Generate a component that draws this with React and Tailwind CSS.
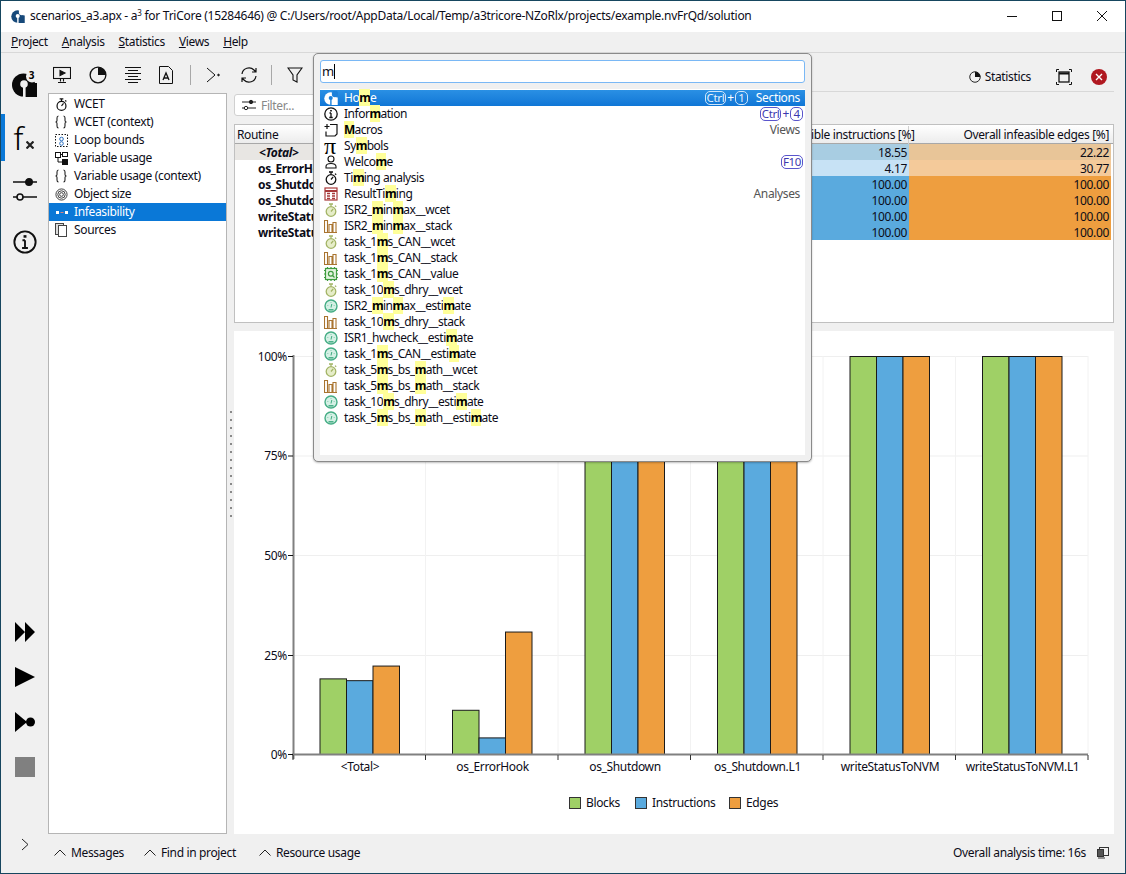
import React from 'react';

const font = "font-['Noto_Sans',sans-serif] text-[12px] tracking-[-0.35px] text-[#0c0c18]";

const Stopwatch = ({ c = '#111', fill = 'none', s = 14 }) => (
  <svg width={s} height={s} viewBox="0 0 14 14" fill="none" stroke={c} strokeWidth="1.3">
    <circle cx="7" cy="8.500" r="4.800" fill={fill} />
    <path d="M5 1h4M7 1v2.500M11 2.600l1.200 1.200M7 8.500l2.200-2.600" />
  </svg>
);

const GreenWatch = () => <Stopwatch c="#a3b466" fill="#e6edc9" />;

const Gauge = () => (
  <svg width="14" height="14" viewBox="0 0 14 14" fill="none" stroke="#45ad85" strokeWidth="1.400">
    <circle cx="7" cy="7" r="6" fill="#d5f0e5" />
    <path d="M7 8.500l.8-3.500M3.800 6.500v.6M10.200 6.500v.6M7 3.200v.6" strokeWidth="1.100" />
    <path d="M4.500 10.800h5" strokeWidth="1.500" />
  </svg>
);

const Bars = () => (
  <svg width="13" height="14" viewBox="0 0 13 14" fill="none" stroke="#a9742f" strokeWidth="1.100">
    <path d="M.5 13.500V1.500h3v12M5 13.500V5.500h3v8M9 13.500V3.500h3v10M0 13.500h13" />
  </svg>
);

const Chip = () => (
  <svg width="14" height="14" viewBox="0 0 14 14" fill="none" stroke="#3f9c3f" strokeWidth="1.200">
    <rect x="1.500" y="1.500" width="11" height="11" fill="#e4f4e0" />
    <circle cx="6.800" cy="6.800" r="2.400" />
    <path d="M8.500 8.500l2 2M0 3.500h1.500M0 7h1.500M0 10.500h1.500M12.500 3.500H14M12.500 7H14M12.500 10.500H14M3.500 0v1.500M7 0v1.500M10.500 0v1.500M3.500 12.500V14M7 12.500V14M10.500 12.500V14" />
  </svg>
);

const ResultTable = () => (
  <svg width="14" height="14" viewBox="0 0 14 14" fill="none" stroke="#a83a3a" strokeWidth="1.200">
    <rect x="1" y="1" width="12" height="12" />
    <path d="M1 4h12" strokeWidth="2" />
    <path d="M3 6.500h3M8 6.500h3M3 9h3M8 9h3M3 11.500h3M8 11.500h3" strokeWidth="1.400" />
  </svg>
);

// a3 mark: disc with hole and slit, stem on the right, notch top right for the 3
const Logo = ({ w = 14, h = 14, c = '#111', bg = '#fff' }) => (
  <svg width={w} height={h} viewBox="0 0 25 26">
    <circle cx="11.500" cy="14" r="11.500" fill={c} />
    <rect x="19" y="12" width="6" height="14" fill={c} />
    <rect x="11.500" y="22" width="9" height="4" fill={c} />
    <circle cx="12" cy="13" r="3.800" fill={bg} />
    <rect x="11" y="13" width="2.600" height="13" fill={bg} />
    <circle cx="20" cy="5.500" r="6" fill={bg} />
  </svg>
);

const Info = ({ s = 14, w = 1.300 }) => (
  <svg width={s} height={s} viewBox="0 0 14 14" fill="none" stroke="#111" strokeWidth={w}>
    <circle cx="7" cy="7" r="6.200" />
    <path d="M7 6v4.500M5.500 6H7M5.300 10.500h3.400" />
    <path d="M7 3v1.500" strokeWidth="1.700" />
  </svg>
);

const PieIcon = ({ s = 14, w = 1.200 }) => (
  <svg width={s} height={s} viewBox="0 0 16 16">
    <circle cx="8" cy="8" r="7" fill="none" stroke="#111" strokeWidth={w} />
    <path d="M8 8V1a7 7 0 0 1 7 7z" fill="#111" />
  </svg>
);

const Braces = () => (
  <svg width="12" height="14" viewBox="0 0 12 14" fill="none" stroke="#222" strokeWidth="1.100">
    <path d="M3.500 1C2 1 2 1.800 2 3v2.500C2 6.500 1.500 7 .5 7c1 0 1.500.5 1.500 1.500V11c0 1.200 0 2 1.500 2" />
    <path d="M8.500 1C10 1 10 1.800 10 3v2.500c0 1 .5 1.500 1.500 1.500-1 0-1.500.5-1.500 1.500V11c0 1.200 0 2-1.500 2" />
  </svg>
);

const items = [
  { icon: <Logo c="#fff" bg="#1b80da" />, label: 'Ho[m]e', keys: ['Ctrl', '1'], tag: 'Sections', active: true },
  { icon: <Info />, label: 'Infor[m]ation', keys: ['Ctrl', '4'] },
  {
    icon: (
      <svg width="14" height="14" viewBox="0 0 14 14" fill="none" stroke="#111" strokeWidth="1.200">
        <path d="M6 1.500h7V11l-2 2H2V8.500M3 1v5M.5 3.500h5" />
      </svg>
    ),
    label: '[M]acros',
    tag: 'Views',
  },
  { icon: <span className="text-[24px] leading-[14px] font-['Liberation_Serif',serif] text-black">π</span>, label: 'Sy[m]bols' },
  {
    icon: (
      <svg width="14" height="14" viewBox="0 0 14 14" fill="none" stroke="#111" strokeWidth="1.100">
        <circle cx="7" cy="4" r="3" />
        <path d="M2 13v-1.500c0-2 2-3 5-3s5 1 5 3V13z" />
      </svg>
    ),
    label: 'Welco[m]e',
    keys: ['F10'],
  },
  { icon: <Stopwatch />, label: 'Ti[m]ing analysis' },
  { icon: <ResultTable />, label: 'ResultTi[m]ing', tag: 'Analyses' },
  { icon: <GreenWatch />, label: 'ISR2_[m]in[m]ax__wcet' },
  { icon: <Bars />, label: 'ISR2_[m]in[m]ax__stack' },
  { icon: <GreenWatch />, label: 'task_1[m]s_CAN__wcet' },
  { icon: <Bars />, label: 'task_1[m]s_CAN__stack' },
  { icon: <Chip />, label: 'task_1[m]s_CAN__value' },
  { icon: <GreenWatch />, label: 'task_10[m]s_dhry__wcet' },
  { icon: <Gauge />, label: 'ISR2_[m]in[m]ax__esti[m]ate' },
  { icon: <Bars />, label: 'task_10[m]s_dhry__stack' },
  { icon: <Gauge />, label: 'ISR1_hwcheck__esti[m]ate' },
  { icon: <Gauge />, label: 'task_1[m]s_CAN__esti[m]ate' },
  { icon: <GreenWatch />, label: 'task_5[m]s_bs_[m]ath__wcet' },
  { icon: <Bars />, label: 'task_5[m]s_bs_[m]ath__stack' },
  { icon: <Gauge />, label: 'task_10[m]s_dhry__esti[m]ate' },
  { icon: <Gauge />, label: 'task_5[m]s_bs_[m]ath__esti[m]ate' },
];

function Label({ text }) {
  return text.split(/(\[.*?\])/).map((part, i) =>
    part.startsWith('[') ? (
      <span key={i} className="bg-[#ffff99] font-bold text-black tracking-[-0.9px]">{part.slice(1, -1)}</span>
    ) : (
      <span key={i} className="tracking-[-0.45px]">{part}</span>
    )
  );
}

function Keys({ keys, active }) {
  const chip = active ? 'border-[#cfe6fb] text-[#e8f3fd]' : 'border-[#5a55cc] text-[#3c38b0]';
  return (
    <div className="flex items-center gap-[1px] mr-[2px]">
      {keys.map((k, i) => (
        <React.Fragment key={k}>
          {i > 0 && <span className={active ? 'text-white' : 'text-[#3c38b0]'}>+</span>}
          <span className={`h-[14px] px-[1px] min-w-[13px] text-center rounded-[5px] border-[1.5px] leading-[11px] text-[11.5px] ${chip}`}>{k}</span>
        </React.Fragment>
      ))}
    </div>
  );
}

function PaletteRow({ row }) {
  return (
    <div className={`h-4 flex items-center leading-4 ${row.active ? 'bg-gradient-to-b from-[#2a90e4] to-[#0f76d6]' : ''}`}>
      <div className="w-[24px] pl-[4px] flex items-center">{row.icon}</div>
      <div className={`flex-1 whitespace-pre ${row.active ? 'text-white' : ''}`}>
        <Label text={row.label} />
      </div>
      {row.keys && <Keys keys={row.keys} active={row.active} />}
      {row.tag && <span className={`ml-[6px] mr-[5px] ${row.active ? 'text-white' : 'text-[#555]'}`}>{row.tag}</span>}
    </div>
  );
}

const sideItems = [
  { name: 'WCET', icon: <Stopwatch s={13} /> },
  { name: 'WCET (context)', icon: <Braces /> },
  {
    name: 'Loop bounds',
    icon: (
      <svg width="13" height="13" viewBox="0 0 13 13" fill="none" stroke="#111" strokeDasharray="1.500 1.500">
        <rect x=".5" y=".5" width="12" height="12" />
        <circle cx="6.500" cy="5" r="1.800" stroke="#2a6fc0" strokeDasharray="none" />
        <circle cx="6.500" cy="9.500" r="1.800" stroke="#2a6fc0" strokeDasharray="none" />
      </svg>
    ),
  },
  {
    name: 'Variable usage',
    icon: (
      <svg width="13" height="13" viewBox="0 0 13 13" fill="none" stroke="#111">
        <rect x=".5" y=".5" width="5" height="5" />
        <rect x="7.500" y=".5" width="5" height="4" />
        <rect x="7.500" y="7.500" width="5" height="5" fill="#111" />
        <path d="M5.500 2.500h2M3 5.500v4.500h4.500" />
      </svg>
    ),
  },
  { name: 'Variable usage (context)', icon: <Braces /> },
  {
    name: 'Object size',
    icon: (
      <svg width="13" height="13" viewBox="0 0 14 14" fill="none" stroke="#333">
        <circle cx="7" cy="7" r="6" />
        <circle cx="7" cy="7" r="4" />
        <circle cx="7" cy="7" r="2" />
      </svg>
    ),
  },
  {
    name: 'Infeasibility',
    active: true,
    icon: (
      <svg width="14" height="14" viewBox="0 0 14 14">
        <rect x="1" y="6" width="3" height="3" fill="#fff" />
        <rect x="5.500" y="7" width="3" height="1" fill="#d98080" />
        <rect x="10" y="6" width="3" height="3" fill="#fff" />
      </svg>
    ),
  },
  {
    name: 'Sources',
    icon: (
      <svg width="13" height="14" viewBox="0 0 13 14" fill="#fff" stroke="#444">
        <rect x=".5" y=".5" width="8" height="11" fill="#ddd" />
        <rect x="3.500" y="2.500" width="8" height="11" />
      </svg>
    ),
  },
];

const tableRows = [
  { name: '<Total>', i: '18.55', e: '22.22', ci: 'bg-[#a8cde2]', ce: 'bg-[#e8c598]', total: true },
  { name: 'os_ErrorHook', i: '4.17', e: '30.77', ci: 'bg-[#c7e2f5]', ce: 'bg-[#f4ca9a]' },
  { name: 'os_Shutdown', i: '100.00', e: '100.00', ci: 'bg-[#5aaade]', ce: 'bg-[#ee9e3f]' },
  { name: 'os_Shutdown.L1', i: '100.00', e: '100.00', ci: 'bg-[#5aaade]', ce: 'bg-[#ee9e3f]' },
  { name: 'writeStatusToNVM', i: '100.00', e: '100.00', ci: 'bg-[#5aaade]', ce: 'bg-[#ee9e3f]' },
  { name: 'writeStatusToNVM.L1', i: '100.00', e: '100.00', ci: 'bg-[#5aaade]', ce: 'bg-[#ee9e3f]' },
];

const chartGroups = [
  { name: '<Total>', v: [19, 18.55, 22.22] },
  { name: 'os_ErrorHook', v: [11.11, 4.17, 30.77] },
  { name: 'os_Shutdown', v: [100, 100, 100] },
  { name: 'os_Shutdown.L1', v: [100, 100, 100] },
  { name: 'writeStatusToNVM', v: [100, 100, 100] },
  { name: 'writeStatusToNVM.L1', v: [100, 100, 100] },
];
const barColors = ['#9fd066', '#5aaade', '#ee9e3f'];

function Chart() {
  const ticks = [293, 425.5, 558, 690.5, 823, 955.5, 1088];
  const ys = [[356, '100%'], [455.5, '75%'], [555, '50%'], [655, '25%'], [754, '0%']];
  return (
    <svg width="880" height="503" viewBox="234 331 880 503" className="block" fontSize="12" fill="#0c0c18">
      {ys.map(([y]) => <path key={y} d={`M293 ${y + 0.5}H1088`} stroke="#efefef" />)}
      {ticks.slice(1).map(x => <path key={x} d={`M${x} 356V754`} stroke="#f2f2f2" />)}
      {chartGroups.map((g, gi) => {
        const x0 = 320 + gi * 132.5;
        return (
          <g key={g.name}>
            {g.v.map((v, i) => {
              const h = v * 3.98;
              return <rect key={i} x={x0 + i * 26.5} y={754.5 - h} width="26.5" height={h} fill={barColors[i]} stroke="#1a1a1a" />;
            })}
            <text x={x0 + 40} y="771" textAnchor="middle">{g.name}</text>
          </g>
        );
      })}
      <path d="M293.5 355V759M292 754.5H1088" stroke="#808080" strokeWidth="2" fill="none" />
      {ys.map(([y, t]) => (
        <g key={t}>
          <path d={`M288 ${y + 0.5}H293`} stroke="#111" />
          <text x="287" y={y + 4.5} textAnchor="end">{t}</text>
        </g>
      ))}
      {ticks.map(x => <path key={x} d={`M${x} 755V760`} stroke="#333" />)}
      {[[569, 'Blocks', 0], [635, 'Instructions', 1], [729, 'Edges', 2]].map(([x, t, i]) => (
        <g key={t}>
          <rect x={x + 0.5} y="797.5" width="11" height="11" fill={barColors[i]} stroke="#333" />
          <text x={x + 17} y="807">{t}</text>
        </g>
      ))}
    </svg>
  );
}

function Chevron() {
  return (
    <svg width="12" height="7" viewBox="0 0 12 7" fill="none" stroke="#222" strokeWidth="1"><path d="M0.5 6.500L6 1l5.500 5.500" /></svg>
  );
}

export default function App() {
  return (
    <div className={`relative w-[1126px] h-[874px] overflow-hidden flex flex-col bg-[#f0f0f0] border border-[#16465f] ${font}`}>
      {/* title bar */}
      <div className="h-[31px] pb-[1px] bg-white flex items-center pl-[10px] shrink-0">
        <Logo w={14} h={14} c="#17497a" />
        <span className="ml-[5px] whitespace-pre tracking-[-0.27px]">scenarios_a3.apx - a<sup className="text-[8px]">3</sup> for TriCore (15284646) @ C:/Users/root/AppData/Local/Temp/a3tricore-NZoRlx/projects/example.nvFrQd/solution</span>
        <div className="ml-auto flex items-center">
          <div className="w-[45px] flex justify-center"><div className="w-[10px] h-[1px] bg-[#111]" /></div>
          <div className="w-[45px] flex justify-center"><div className="w-[10px] h-[10px] border border-[#111]" /></div>
          <div className="w-[46px] flex justify-center">
            <svg width="10" height="10" viewBox="0 0 10 10" stroke="#111" fill="none"><path d="M0 0l10 10M10 0L0 10" /></svg>
          </div>
        </div>
      </div>
      {/* menu */}
      <div className="h-[21px] shrink-0 flex items-center gap-[14px] pl-[10px] border-b border-[#d8d8d8]">
        {['Project', 'Analysis', 'Statistics', 'Views', 'Help'].map(m => (
          <span key={m}><span className="underline">{m[0]}</span>{m.slice(1)}</span>
        ))}
      </div>
      <div className="flex-1 flex min-h-0">
        {/* icon rail */}
        <div className="w-[47px] shrink-0 flex flex-col items-center">
          <div className="mt-[18px] h-[26px] relative">
            <Logo w={25} h={26} c="#0a0a0a" bg="#f0f0f0" />
            <span className="absolute right-[3px] top-[-3px] text-[10px] font-bold text-black">3</span>
          </div>
          <div className="mt-[17px] self-stretch h-[47px] border-l-[4px] border-[#0a78d7] flex items-center justify-center pr-[5px]">
            <span className="font-['Noto_Sans',sans-serif] font-light text-[32px] leading-none text-black tracking-normal">f</span>
            <svg className="mt-[14px] ml-[3px]" width="8" height="8" viewBox="0 0 8 8" stroke="#222" strokeWidth="2.200"><path d="M.5.500l7 7M7.500.500l-7 7" /></svg>
          </div>
          <svg className="mt-[16px]" width="24" height="24" viewBox="0 0 24 24" fill="none" stroke="#111" strokeWidth="1.600">
            <path d="M0 5h24M0 20h24" />
            <circle cx="16" cy="5" r="3.200" fill="#111" />
            <circle cx="7" cy="20" r="3" fill="#f0f0f0" />
          </svg>
          <div className="mt-[29px] h-6"><Info s={24} w={1.100} /></div>
          <svg className="mt-auto" width="20" height="20" viewBox="0 0 20 20" fill="#000"><path d="M0 0l10 10L0 20zM10 0l10 10-10 10z" /></svg>
          <svg className="mt-[25px]" width="20" height="20" viewBox="0 0 20 20" fill="#000"><path d="M0 0l20 10L0 20z" /></svg>
          <svg className="mt-[25px]" width="20" height="20" viewBox="0 0 20 20" fill="#000"><path d="M0 0l12 10L0 20z" /><circle cx="15.500" cy="10" r="4.500" /></svg>
          <div className="mt-[25px] w-5 h-5 bg-[#808080]" />
          <svg className="mt-[61px] mb-[22px]" width="8" height="13" viewBox="0 0 8 13" fill="none" stroke="#222"><path d="M1 1l6 5.500L1 12" /></svg>
        </div>
        <div className="flex-1 min-w-0 flex flex-col">
          {/* toolbar */}
          <div className="h-[40px] shrink-0 flex items-start">
            <div className="h-[40px] pt-[4px] flex items-center pl-[5px]">
              <svg width="18" height="18" viewBox="0 0 18 18" fill="none" stroke="#111" strokeWidth="1.100">
                <rect x="0.500" y="1.500" width="17" height="11" />
                <path d="M7 4.500l5 2.500-5 2.500z" fill="#111" />
                <path d="M7.500 12.500v3M10.500 12.500v3M5 16.500h8" />
              </svg>
              <div className="ml-[18px] h-[18px]"><PieIcon s={18} /></div>
              <svg className="ml-[17px]" width="18" height="16" viewBox="0 0 18 16" fill="none" stroke="#111"><path d="M1 .5h16M4 3.500h10M1 6.500h16M4 9.500h10M1 12.500h16M4 15.500h10" /></svg>
              <svg className="ml-[17px]" width="14" height="18" viewBox="0 0 14 18" fill="none" stroke="#111">
                <path d="M.5 .5h9l4 4v13H.5z" />
                <path d="M4 14l3-7 3 7M5 12h4" strokeWidth="1.300" />
              </svg>
              <div className="ml-[17px] w-[1px] h-[20px] bg-[#a8a8a8]" />
              <svg className="ml-[15px]" width="14" height="16" viewBox="0 0 14 16" fill="none" stroke="#111"><path d="M1 1l8 7-8 7" /><circle cx="12.500" cy="8" r="0.800" fill="#111" /></svg>
              <svg className="ml-[20px]" width="18" height="18" viewBox="0 0 18 18" fill="none" stroke="#111" strokeWidth="1.200">
                <path d="M2 8a7 7 0 0 1 12-4l2 2M16 2v4h-4M16 10a7 7 0 0 1-12 4l-2-2M2 16v-4h4" />
              </svg>
              <div className="ml-[13px] w-[1px] h-[20px] bg-[#a8a8a8]" />
              <svg className="ml-[15px]" width="16" height="16" viewBox="0 0 16 16" fill="none" stroke="#111" strokeWidth="1.100"><path d="M1 1h14L10 8v7l-4-2V8z" /></svg>
            </div>
            <div className="ml-[30px] flex-1 h-[39px] pt-[9px] mr-[11px] flex items-center justify-end border-b border-[#d8d8d8]">
              <PieIcon s={12} />
              <span className="ml-[4px]">Statistics</span>
              <svg className="ml-[25px]" width="16" height="16" viewBox="0 0 16 16" fill="none" stroke="#111">
                <path d="M0.500 3V0.500H3M13 0.500h2.500V3M15.500 13v2.500H13M3 15.500H0.500V13" />
                <rect x="3" y="3" width="10" height="10" strokeWidth="1.300" />
                <path d="M3 4.500h10" strokeWidth="2" />
              </svg>
              <svg className="ml-[19px]" width="16" height="16" viewBox="0 0 16 16">
                <circle cx="8" cy="8" r="8" fill="#b01820" />
                <path d="M5 5l6 6M11 5l-6 6" stroke="#fff" strokeWidth="1.400" />
              </svg>
              <div className="w-[7px]" />
            </div>
          </div>
          <div className="flex-1 flex min-h-0">
            {/* view list */}
            <div className="w-[179px] shrink-0 bg-white border border-[#b5b5b5] pt-[1px]">
              {sideItems.map(s => (
                <div key={s.name} className={`h-[18px] flex items-center pl-[6px] ${s.active ? 'bg-[#0a78d7] text-white' : ''}`}>
                  <div className="w-[19px] flex items-center">{s.icon}</div>
                  <span>{s.name}</span>
                </div>
              ))}
            </div>
            {/* splitter handle */}
            <div className="w-[7px] shrink-0 flex flex-col justify-center items-center gap-[6px]">
              {Array.from({ length: 14 }).map((_, i) => <div key={i} className="w-[2px] h-[2px] bg-[#8a8a8a]" />)}
            </div>
            <div className="w-[880px] shrink-0 flex flex-col">
              <div className="mt-[1px] h-[22px] w-[120px] flex items-center bg-white border border-[#d0d0d0] rounded-[3px] pl-[7px] text-[#888]">
                <svg width="14" height="12" viewBox="0 0 14 12" fill="none" stroke="#222">
                  <path d="M0 3h14M0 9h14" />
                  <circle cx="9" cy="3" r="1.700" fill="#222" />
                  <circle cx="4" cy="9" r="1.700" fill="#fff" />
                </svg>
                <span className="ml-[5px] pt-[1px]">Filter...</span>
              </div>
              {/* table */}
              <div className="mt-[8px] h-[199px] bg-white border border-[#c0c0c0]">
                <div className="h-[19px] pt-[1px] flex items-center bg-gradient-to-b from-white to-[#ececec] border-b border-[#a8a8a8] pr-[2px] whitespace-nowrap">
                  <span className="w-[504px] pl-[2px]">Routine</span>
                  <span className="w-[170px] text-right pr-[2px] border-r border-[#d0d0d0]">Overall infeasible instructions [%]</span>
                  <span className="flex-1 text-right pr-[2px]">Overall infeasible edges [%]</span>
                </div>
                {tableRows.map(r => (
                  <div key={r.name} className="h-4 flex items-start leading-[18px] pr-[2px]">
                    <span className={`w-[504px] h-4 font-bold whitespace-nowrap ${r.total ? 'bg-[#e8e6e3] italic pl-[24px]' : 'pl-[23px]'}`}>{r.name}</span>
                    <span className={`w-[170px] h-4 text-right pr-[2px] ${r.ci}`}>{r.i}</span>
                    <span className={`flex-1 h-4 text-right pr-[2px] ${r.ce}`}>{r.e}</span>
                  </div>
                ))}
              </div>
              <div className="h-[8px] shrink-0" />
              <div className="flex-1 bg-white"><Chart /></div>
            </div>
          </div>
          {/* status bar */}
          <div className="h-[39px] shrink-0 flex items-center pb-[2px] pr-[16px]">
            <div className="ml-[6px] flex items-center"><Chevron /><span className="ml-[5px]">Messages</span></div>
            <div className="ml-[20px] flex items-center"><Chevron /><span className="ml-[5px]">Find in project</span></div>
            <div className="ml-[23px] flex items-center"><Chevron /><span className="ml-[5px]">Resource usage</span></div>
            <span className="ml-auto">Overall analysis time: 16s</span>
            <svg className="ml-[11px]" width="12" height="12" viewBox="0 0 12 12" fill="none" stroke="#333">
              <rect x="2.500" y="0.500" width="9" height="8" />
              <rect x="0.500" y="2.500" width="6" height="7" fill="#555" />
              <path d="M1 11h7" />
            </svg>
          </div>
        </div>
      </div>
      {/* command palette */}
      <div className="absolute left-[312px] top-[52px] w-[499px] h-[409px] bg-[#f0f0f0] border border-[#8a8a8a] rounded-[5px] shadow-[0_1px_2px_rgba(0,0,0,0.25)] p-[6px] flex flex-col">
        <div className="h-[23px] shrink-0 bg-white border border-[#7ab8f5] rounded-[3px] flex items-center pl-[1px] text-[13px]">
          m<span className="w-[1px] h-[15px] bg-black" />
        </div>
        <div className="mt-[6px] flex-1 bg-white pt-[1px]">
          {items.map(row => <PaletteRow key={row.label} row={row} />)}
        </div>
      </div>
    </div>
  );
}
